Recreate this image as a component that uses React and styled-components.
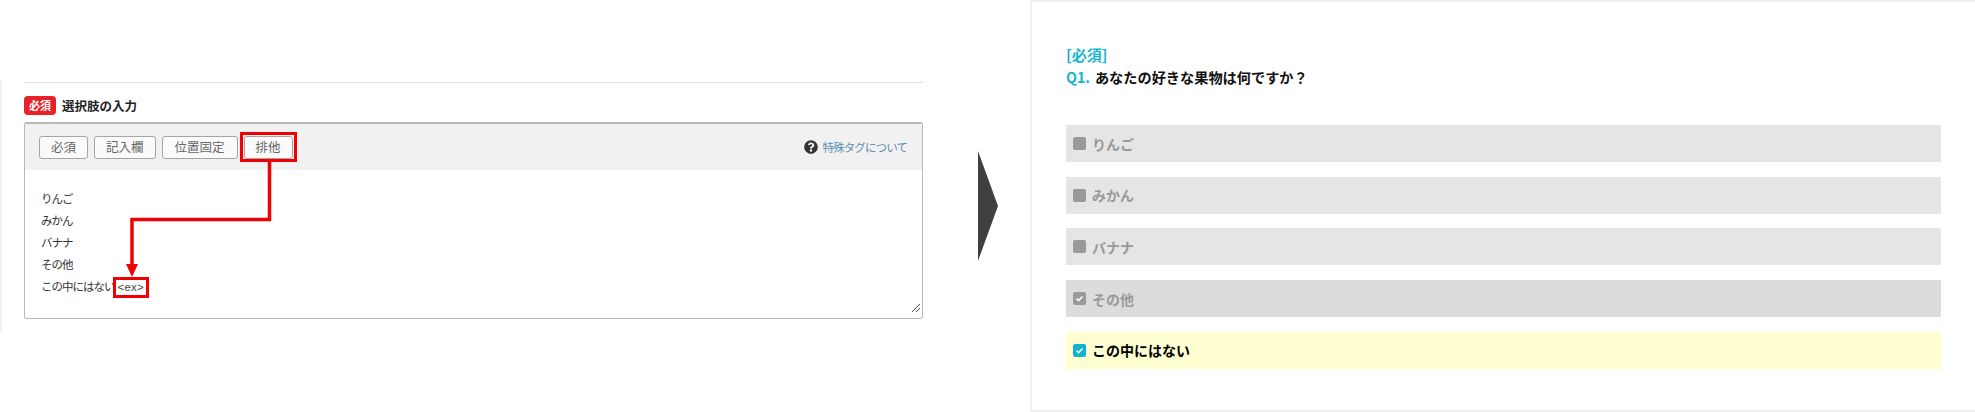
import React from 'react';
import styled, { createGlobalStyle } from 'styled-components';
import { FaQuestionCircle } from 'react-icons/fa';

const GlobalStyle = createGlobalStyle`
  html, body {
    margin: 0;
    padding: 0;
    background: #fff;
  }
  body {
    font-family: "Noto Sans CJK JP", "Noto Sans", sans-serif;
  }
`;

const Page = styled.div`
  display: flex;
  align-items: flex-start;
  width: 1975px;
  height: 412px;
  overflow: hidden;
`;

const LeftPane = styled.section`
  box-sizing: border-box;
  flex: none;
  width: 923px;
  height: 253px;
  margin-top: 80px;
  padding: 2px 0 0 22px;
  border-left: 2px solid #f3f3f3;
`;

const Divider = styled.hr`
  height: 0;
  margin: 0 0 12px;
  border: 0;
  border-top: 1px dotted #cfcfcf;
`;

const FieldHead = styled.div`
  display: flex;
  align-items: center;
  gap: 6px;
  height: 20px;
  margin-bottom: 7px;
`;

const RequiredBadge = styled.span`
  width: 32px;
  height: 19px;
  border-radius: 4px;
  background: #e8202a;
  color: #fff;
  font-size: 11px;
  font-weight: 700;
  line-height: 19px;
  text-align: center;
`;

const FieldTitle = styled.h3`
  margin: 0;
  color: #222;
  font-size: 12.5px;
  font-weight: 700;
`;

const Editor = styled.div`
  position: relative;
  box-sizing: border-box;
  height: 197px;
  border: 1px solid #b9b9b9;
  border-top-width: 2px;
  border-radius: 3px;
`;

const Toolbar = styled.div`
  display: flex;
  align-items: center;
  gap: 6px;
  box-sizing: border-box;
  height: 46px;
  padding: 0 15px 0 14px;
  background: #f1f1f1;
`;

const TagButton = styled.button`
  box-sizing: border-box;
  height: 23px;
  padding: 0 ${({ $wide }) => ($wide ? '12px' : '11px')};
  border: 1px solid #a5a5a5;
  border-radius: 3px;
  background: #fafafa;
  color: #666;
  font-family: inherit;
  font-size: 12.5px;
  line-height: 20px;
`;

const MarkedFrame = styled.span`
  display: flex;
  margin: -4px 0 -3px -4px;
  padding: 4px 4px 3px;
  outline: 3.5px solid #f00000;
  outline-offset: -3.5px;
`;

const HelpLink = styled.a`
  display: flex;
  align-items: center;
  gap: 5px;
  margin-left: auto;
  color: #5b8fb3;
  font-size: 11.5px;
  letter-spacing: -0.9px;

  svg {
    color: #333;
    font-size: 14px;
  }
`;

const InputBody = styled.div`
  padding: 17px 16px;
  color: #333;
  font-size: 11.5px;
  letter-spacing: -1px;
  line-height: 22px;
`;

const ExTag = styled.span`
  display: inline-block;
  margin-left: 1px;
  padding: 0 2px;
  color: #444;
  font-family: "Liberation Sans", sans-serif;
  font-size: 11.5px;
  letter-spacing: 0.2px;
  line-height: 15px;
  outline: 3.5px solid #f00000;
`;

const Connector = styled.svg`
  position: absolute;
  left: 76px;
  top: 37px;
`;

const ResizeGrip = styled.svg`
  position: absolute;
  right: 1px;
  bottom: 5px;
`;

const FlowArrow = styled.svg`
  flex: none;
  margin: 151px 32px 0 55px;
`;

const SurveyPanel = styled.section`
  box-sizing: border-box;
  flex: 1;
  height: 412px;
  padding: 42px 34px 0 34px;
  border: 2px solid #f1f1f1;
  border-right: 0;
`;

const RequiredMark = styled.div`
  color: #16b5cc;
  font-size: 15px;
  font-weight: 700;
  line-height: 22px;
`;

const Question = styled.div`
  margin-bottom: 37px;
  color: #111;
  font-size: 14.2px;
  font-weight: 700;
  line-height: 22px;
`;

const QuestionNo = styled.span`
  margin-right: 5px;
  color: #16b5cc;
`;

const Options = styled.div`
  display: flex;
  flex-direction: column;
  gap: 14.7px;
`;

const rowColors = { idle: '#e5e5e5', muted: '#dcdcdc', active: '#ffffd2' };

const OptionRow = styled.div`
  display: flex;
  align-items: center;
  gap: 6px;
  height: 37px;
  padding-left: 7px;
  background: ${({ $state }) => rowColors[$state]};
  color: ${({ $state }) => ($state === 'active' ? '#000' : '#999')};
  font-size: 14px;
  font-weight: 700;
`;

const Check = styled.span`
  display: flex;
  align-items: center;
  justify-content: center;
  width: 13px;
  height: 13px;
  border-radius: 2px;
  background: ${({ $state }) => ($state === 'active' ? '#0fb4cd' : '#999')};
`;

const options = [
  { label: 'りんご', state: 'idle' },
  { label: 'みかん', state: 'idle' },
  { label: 'バナナ', state: 'idle' },
  { label: 'その他', state: 'muted', checked: true },
  { label: 'この中にはない', state: 'active', checked: true },
];

const choices = ['りんご', 'みかん', 'バナナ', 'その他'];

export default function App() {
  return (
    <Page>
      <GlobalStyle />
      <LeftPane>
        <Divider />
        <FieldHead>
          <RequiredBadge>必須</RequiredBadge>
          <FieldTitle>選択肢の入力</FieldTitle>
        </FieldHead>
        <Editor>
          <Toolbar>
            <TagButton>必須</TagButton>
            <TagButton>記入欄</TagButton>
            <TagButton $wide>位置固定</TagButton>
            <MarkedFrame>
              <TagButton>排他</TagButton>
            </MarkedFrame>
            <HelpLink>
              <FaQuestionCircle />
              特殊タグについて
            </HelpLink>
          </Toolbar>
          <InputBody>
            {choices.map((c) => (
              <div key={c}>{c}</div>
            ))}
            <div>
              この中にはない<ExTag>&lt;ex&gt;</ExTag>
            </div>
          </InputBody>
          <Connector width="180" height="120" viewBox="0 0 180 120">
            <path d="M168.5 0V58.5H31V106" fill="none" stroke="#f00000" strokeWidth="3.5" />
            <path d="M25 103H37L31 116Z" fill="#f00000" />
          </Connector>
          <ResizeGrip width="10" height="10" viewBox="0 0 10 10">
            <path d="M1 9L9 1M5 9L9 5" stroke="#555" strokeWidth="1" fill="none" />
          </ResizeGrip>
        </Editor>
      </LeftPane>

      <FlowArrow width="20" height="110" viewBox="0 0 20 110">
        <path d="M0 0L20 55L0 110Z" fill="#404040" />
      </FlowArrow>

      <SurveyPanel>
        <RequiredMark>[必須]</RequiredMark>
        <Question>
          <QuestionNo>Q1.</QuestionNo>あなたの好きな果物は何ですか？
        </Question>
        <Options>
          {options.map((o) => (
            <OptionRow key={o.label} $state={o.state}>
              <Check $state={o.state}>
                {o.checked && (
                  <svg width="9" height="9" viewBox="0 0 9 9">
                    <path d="M1.5 4.5L3.6 6.6L7.5 2.4" fill="none" stroke="#fff" strokeWidth="1.5" />
                  </svg>
                )}
              </Check>
              {o.label}
            </OptionRow>
          ))}
        </Options>
      </SurveyPanel>
    </Page>
  );
}
